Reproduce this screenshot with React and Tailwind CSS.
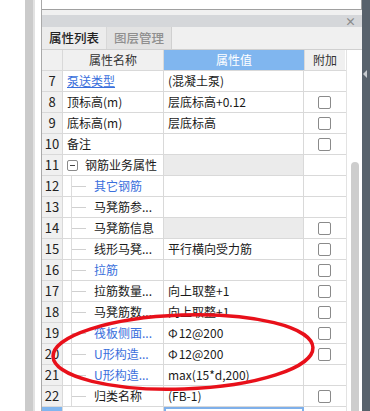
import React from 'react';

const rows = [
  { n: 7, name: '泵送类型', link: true, value: '(混凝土泵)' },
  { n: 8, name: '顶标高(m)', value: '层底标高+0.12', cb: true },
  { n: 9, name: '底标高(m)', value: '层底标高', cb: true },
  { n: 10, name: '备注', value: '', cb: true },
  { n: 11, name: '钢筋业务属性', group: true, gray: true },
  { n: 12, name: '其它钢筋', tree: true, blue: true },
  { n: 13, name: '马凳筋参...', tree: true },
  { n: 14, name: '马凳筋信息', tree: true, gray: true, cb: true },
  { n: 15, name: '线形马凳...', tree: true, value: '平行横向受力筋', cb: true },
  { n: 16, name: '拉筋', tree: true, blue: true, cb: true },
  { n: 17, name: '拉筋数量...', tree: true, value: '向上取整+1', cb: true },
  { n: 18, name: '马凳筋数...', tree: true, value: '向上取整+1', cb: true },
  { n: 19, name: '筏板侧面...', tree: true, blue: true, steel: true, value: '12@200', cb: true },
  { n: 20, name: 'U形构造...', tree: true, blue: true, steel: true, value: '12@200', cb: true },
  { n: 21, name: 'U形构造...', tree: true, blue: true, value: 'max(15*d,200)' },
  { n: 22, name: '归类名称', tree: true, value: '(FB-1)', cb: true },
];

const Checkbox = () => (
  <div className="w-[13px] h-[13px] rounded-[2px] border border-[#8a8a8a] bg-white" />
);

const Row = ({ r }) => (
  <div className="flex h-[21px] border-b border-[#d9d9d9]">
    <div className="w-[21px] shrink-0 bg-[#f0f0f0] border-r border-[#d9d9d9] flex items-center justify-center text-[13px] text-[#222]">
      {r.n}
    </div>
    <div className="w-[101px] shrink-0 border-r border-[#d9d9d9] flex items-center overflow-hidden whitespace-nowrap bg-white">
      {r.tree && (
        <>
          <div className="ml-[8px] w-px h-full bg-[#dcdcdc]" />
          <div className="w-[14px] h-px bg-[#d0d0d0]" />
          <span className={`ml-[8px] ${r.blue ? 'text-[#3a6fdc]' : 'text-[#1a1a1a]'}`}>{r.name}</span>
        </>
      )}
      {r.group && (
        <>
          <div className="ml-[4px] w-[11px] h-[11px] rounded-[2px] border border-[#8a8a8a] flex items-center justify-center">
            <div className="w-[5px] h-px bg-[#444]" />
          </div>
          <span className="ml-[7px] text-[#1a1a1a]">{r.name}</span>
        </>
      )}
      {!r.tree && !r.group && (
        <span className={`pl-[4px] ${r.link ? 'text-[#3a6fdc] underline' : 'text-[#1a1a1a]'}`}>{r.name}</span>
      )}
    </div>
    <div className={`w-[140px] shrink-0 border-r border-[#d9d9d9] flex items-center pl-[4px] whitespace-nowrap text-[#1a1a1a] ${r.gray ? 'bg-[#ebebeb]' : 'bg-white'}`}>
      {r.steel && <span className="text-[12px] mr-px">Φ</span>}
      {r.value}
    </div>
    <div className="w-[41px] shrink-0 flex items-center justify-center bg-white">
      {r.cb && <Checkbox />}
    </div>
  </div>
);

export default function App() {
  return (
    <div
      className="relative w-[370px] h-[411px] overflow-hidden flex bg-white text-[12px] leading-[20px]"
      style={{ fontFamily: '"Noto Sans CJK SC", "Noto Sans", sans-serif' }}
    >
      {/* left gutter */}
      <div className="w-[25px] shrink-0 bg-white" />
      <div className="w-[8px] shrink-0 bg-[#cbcbcb]" />
      <div className="w-[2px] shrink-0 bg-[#e2e2e2]" />
      <div className="w-[6px] shrink-0 bg-white" />

      {/* panel */}
      <div className="w-[321px] shrink-0 flex flex-col border-l border-[#a9a9a9]">
        <div className="h-[10px] shrink-0 bg-white border-b border-[#a0a0a0] border-r" />
        <div className="h-[5px] shrink-0 bg-[#f0f0f0]" />
        <div className="h-[12px] shrink-0 bg-[#d5d7da] flex items-center justify-end pr-[6px]">
          <span className="text-[11px] leading-none text-[#8a8a8a] font-bold">×</span>
        </div>
        <div className="h-[23px] shrink-0 bg-[#f0f0f0] flex items-stretch border-b border-[#d0d0d0]">
          <div className="w-[65px] flex items-center justify-center bg-[#ececec] text-[#222] text-[12.5px] font-medium border-r border-[#d8d8d8]">
            属性列表
          </div>
          <div className="w-[65px] flex items-center justify-center bg-[#e3e3e3] text-[#8f8f8f] text-[12.5px] font-medium border-r border-[#d0d0d0]">
            图层管理
          </div>
        </div>

        <div className="flex flex-1 min-h-0">
          <div className="w-[304px] shrink-0 flex flex-col">
            {/* header */}
            <div className="flex h-[21px] border-b border-[#d9d9d9]">
              <div className="w-[21px] shrink-0 bg-[#f0f0f0] border-r border-[#d9d9d9]" />
              <div className="w-[101px] shrink-0 bg-[#f0f0f0] border-r border-[#d9d9d9] flex items-center justify-center text-[#333]">
                属性名称
              </div>
              <div className="w-[140px] shrink-0 bg-[#80b6ef] flex items-center justify-center text-white">
                属性值
              </div>
              <div className="w-[41px] shrink-0 bg-[#f0f0f0] border-l border-[#d9d9d9] flex items-center justify-center text-[#333]">
                附加
              </div>
            </div>
            {rows.map((r) => (
              <Row key={r.n} r={r} />
            ))}
            {/* selected partial row */}
            <div className="flex h-[21px]">
              <div className="w-[21px] shrink-0 bg-[#80b6ef] border-r border-[#d9d9d9]" />
              <div className="w-[101px] shrink-0 bg-white border-r border-[#d9d9d9]" />
              <div className="w-[140px] shrink-0 border-2 border-[#7fb0ea] bg-white p-[2px]">
                <div className="w-[22px] h-[12px] bg-[#3d7ee0]" />
              </div>
              <div className="w-[41px] shrink-0 flex justify-center pt-[4px]">
                <Checkbox />
              </div>
            </div>
          </div>
          {/* scroll column */}
          <div className="w-[17px] shrink-0 bg-white border-l border-[#e3e3e3] flex flex-col items-center">
            <div className="h-[112px] shrink-0" />
            <div className="w-[8px] flex-1 rounded-t-[4px] bg-[#cdcdcd]" />
          </div>
        </div>
      </div>

      {/* right dark bar */}
      <div className="w-[8px] shrink-0 bg-[#58626c] flex flex-col items-start">
        <div className="h-[70px] shrink-0" />
        <div className="w-0 h-0 border-y-[4px] border-y-transparent border-r-[4px] border-r-[#c8ccd0] ml-[1px]" />
      </div>

      {/* red annotation */}
      <svg className="absolute left-0 top-0 pointer-events-none" width="370" height="411">
        <ellipse
          cx="183"
          cy="352"
          rx="130"
          ry="37"
          transform="rotate(-2 183 352)"
          fill="none"
          stroke="#e8101a"
          strokeWidth="3.5"
        />
      </svg>
    </div>
  );
}
